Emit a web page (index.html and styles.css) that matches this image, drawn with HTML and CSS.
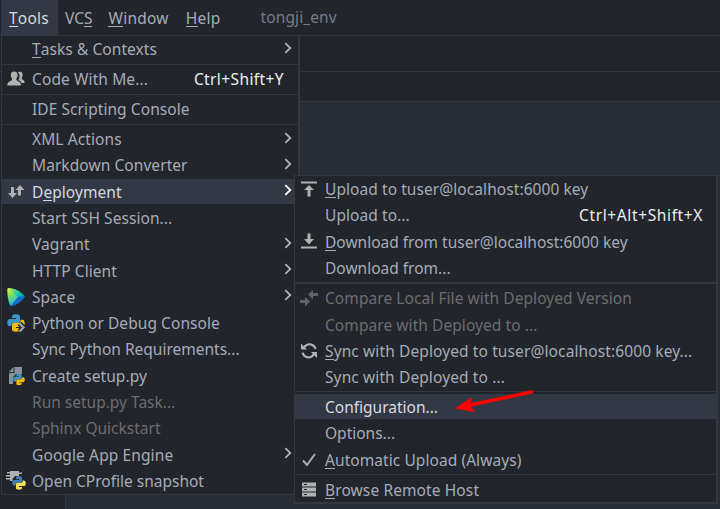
FILE: index.html
```html
<!DOCTYPE html>
<html lang="en">
<head>
<meta charset="utf-8">
<title>Tools menu</title>
<link rel="stylesheet" href="styles.css">
</head>
<body>
<div class="window">
  <header class="menubar">
    <span class="tab active"><u>T</u>ools</span>
    <span class="tab vcs">VC<u>S</u></span>
    <span class="tab win"><u>W</u>indow</span>
    <span class="tab help"><u>H</u>elp</span>
    <span class="project">tongji_env</span>
  </header>
  <div class="toolbar"></div>
  <div class="crumbs"></div>
  <main class="workspace"><div class="side"></div></main>

  <nav class="menu tools">
    <div class="item"><i></i><span><u>T</u>asks &amp; Contexts</span><svg class="chev" viewBox="0 0 8 12"><path d="M1.3 1.2 6.3 6l-5 4.8"/></svg></div>
    <hr>
    <div class="item"><i><svg viewBox="0 0 18 18"><path class="g" d="M11 2.2c3-1.4 5 .4 4.6 3.100-.1 1.500-.7 2.100-.9 3 .2 1.600 3 1.700 3 4.700h-3.200c-.6-1.800-2.200-2.200-3-2.900 1.300-1.900 1.800-5.700-.5-7.900z"/><path class="g" d="M3.800 5.500C3.600 2.700 5.200 1.500 7.200 1.500s3.700 1.200 3.400 4c-.1 1.700-.9 2.700-1.400 3.500.2 2.500 4.800 1.700 4.800 6.500H.3c0-4.800 4.700-4 4.900-6.500-.5-.8-1.300-1.800-1.400-3.500z"/></svg></i><span class="wide">Code With Me...</span><kbd>Ctrl+Shift+Y</kbd></div>
    <hr>
    <div class="item"><i></i><span>IDE Scripting Console</span></div>
    <hr>
    <div class="item"><i></i><span class="wide">XML Actions</span><svg class="chev" viewBox="0 0 8 12"><path d="M1.300 1.200 6.300 6l-5 4.800"/></svg></div>
    <div class="item"><i></i><span>Markdown Converter</span><svg class="chev" viewBox="0 0 8 12"><path d="M1.300 1.200 6.300 6l-5 4.800"/></svg></div>
    <div class="item on"><i><svg viewBox="0 0 18 18"><path class="g" d="M4 4h3v6h3l-4.500 5L1 10h3zM11 12.500V7H8.500l4.500-5 4.500 5H14v5.500z"/></svg></i><span>D<u>e</u>ployment</span><svg class="chev" viewBox="0 0 8 12"><path d="M1.300 1.200 6.300 6l-5 4.800"/></svg></div>
    <div class="item"><i></i><span>Start SSH Session...</span></div>
    <div class="item"><i></i><span>Vagrant</span><svg class="chev" viewBox="0 0 8 12"><path d="M1.300 1.200 6.300 6l-5 4.800"/></svg></div>
    <div class="item"><i></i><span>HTTP Client</span><svg class="chev" viewBox="0 0 8 12"><path d="M1.300 1.200 6.300 6l-5 4.800"/></svg></div>
    <div class="item"><i><svg viewBox="0 0 18 18"><defs><linearGradient id="sp" x1="0" y1="0" x2=".3" y2="1"><stop offset="0" stop-color="#f4f33c"/><stop offset=".45" stop-color="#7de05c"/><stop offset="1" stop-color="#08b8f0"/></linearGradient><linearGradient id="sq" x1="0" y1="0" x2="1" y2="1"><stop offset="0" stop-color="#b8f25c"/><stop offset=".6" stop-color="#10c8a8"/><stop offset="1" stop-color="#0a9ad0"/></linearGradient></defs><path fill="url(#sp)" d="M.3 1.500C.3.500 1 0 2 0l10 8.700L4.500 18C1.500 18 .3 7 .3 1.500z"/><path fill="url(#sq)" d="M1.500 0C8 0 14 3.500 18 8.700l-7 .3z"/><path fill="#1769c8" d="M11 8.700h7C14.500 13.500 9.500 17.500 4 18z"/></svg></i><span>Space</span><svg class="chev" viewBox="0 0 8 12"><path d="M1.300 1.200 6.300 6l-5 4.800"/></svg></div>
    <div class="item"><i><svg viewBox="0 0 18 18"><use href="#py"/><path fill="none" stroke="#22252b" stroke-width="5" d="m12.500 9.500 4 4-4 4"/><path fill="none" stroke="#9da6ae" stroke-width="2.300" d="m12.500 9.500 4 4-4 4"/></svg></i><span>Python or Debug Console</span></div>
    <div class="item"><i></i><span class="tight">Sync Python Requirements...</span></div>
    <div class="item"><i><svg viewBox="0 0 18 18"><path fill="#87939a" d="M7.500 0H15v7H9L6 10v7H2V6h5.500z"/><path fill="#87939a" d="M6.500 0v5H2z"/><svg x="6" y="6.500" width="12" height="12" viewBox="0 0 18 18"><use href="#py"/></svg></svg></i><span>Create setup.py</span></div>
    <div class="item off"><i></i><span class="tight">Run setup.py Task...</span></div>
    <div class="item off"><i></i><span class="tight">Sphinx Quickstart</span></div>
    <div class="item"><i></i><span class="wide">Google App Engine</span><svg class="chev" viewBox="0 0 8 12"><path d="M1.300 1.200 6.300 6l-5 4.800"/></svg></div>
    <div class="item"><i><svg viewBox="0 0 18 18"><path class="g" d="M3-1h9v1.500h3V2h-3v2H8L5.500 7v2H3V7.500h-4V6H3V4.500h-4V3H3V1.500h-3V0h3z"/><svg x="5" y="4" width="14" height="14" viewBox="0 0 18 18"><path fill="#3f7fb5" d="M5 4V2.500C5 .8 6.500.3 9 .3s4 .7 4 2.200V7c0 1.500-.8 2-2 2H7c-2 0-2.600 1-2.600 3.300H2.800C1 12.300.3 11 .3 8.500S1.200 5 3 5h6V4z"/><path fill="#ffdc50" d="M13 14v1.500c0 1.500-1.500 2.200-4 2.200s-4-.7-4-2.200V11c0-1.500.8-2 2-2h4c2 0 2.600-1 2.600-3.300h1.600c1.800 0 2.500 1.300 2.500 3.800S16.800 13 15 13H9v1z"/></svg></svg></i><span class="tight">Open CProfile snapshot</span></div>
  </nav>

  <nav class="menu deploy">
    <div class="item"><i><svg viewBox="0 0 18 18"><path class="g" d="M1 1.500h16v2H1zM9 5l5 5h-3.500v6.500h-3V10H4z"/></svg></i><span><u>U</u>pload to tuser@localhost:6000 key</span></div>
    <div class="item"><i></i><span>Upload to...</span><kbd class="long">Ctrl+Alt+Shift+X</kbd></div>
    <div class="item"><i><svg viewBox="0 0 18 18"><path class="g" d="M1 13.500h16v2H1zM7.500.500h3V6H14l-5 5.500L4 6h3.500z"/></svg></i><span class="tight"><u>D</u>ownload from tuser@localhost:6000 key</span></div>
    <div class="item"><i></i><span class="tight">Download from...</span></div>
    <hr class="thick">
    <div class="item off"><i><svg viewBox="0 0 18 18"><path fill="#616367" d="M8 5.500 13 1v3h5v3h-5v3.500zM0 11h5V8l5 4.500L5 17.500V14H0z"/></svg></i><span>Compare Local File with Deployed Version</span></div>
    <div class="item off"><i></i><span>Compare with Deployed to ...</span></div>
    <div class="item"><i><svg viewBox="0 0 18 18"><path fill="none" stroke="#afb1b3" stroke-width="2.200" d="M4 5.500C7 .8 13.500 1.200 15.600 7M14 12C11 17 4.500 16.500 2.400 10.700"/><path class="g" d="M1 1.500v6h6zM17 16v-6h-6z"/></svg></i><span class="wide"><u>S</u>ync with Deployed to tuser@localhost:6000 key...</span></div>
    <div class="item"><i></i><span class="wide">Sync with Deployed to ...</span></div>
    <hr>
    <div class="item on"><i></i><span class="tight">Configuration...</span></div>
    <div class="item"><i></i><span class="tight">Options...</span></div>
    <div class="item"><i><svg viewBox="0 0 18 18"><path fill="none" stroke="#afb1b3" stroke-width="2" d="m3 9.500 4 4.500 8-11"/></svg></i><span><u>A</u>utomatic Upload (Always)</span></div>
    <hr>
    <div class="item"><i><svg viewBox="0 0 18 18"><path class="g" fill-rule="evenodd" d="M2 1.500h14v4H2zM4 3v1h3V3zM2 6.500h14v4H2zM4 8v1h3V8zM2 11.500h14v4H2zM4 13v1h3v-1z"/></svg></i><span class="wide"><u>B</u>rowse Remote Host</span></div>
  </nav>

  <svg class="arrow" viewBox="0 0 80 24"><path d="M76.500 4 15 17" fill="none" stroke="#f00" stroke-width="3.600" stroke-linecap="round"/><path fill="#f00" d="m0 20.500 17-11.500-2 8 5 7z"/></svg>
  <svg class="defs"><defs><g id="py"><path fill="#3e94c2" d="M5 4V2.500C5 .8 6.500.3 9 .3s4 .7 4 2.200V7c0 1.500-.8 2-2 2H7c-2 0-2.600 1-2.600 3.300H2.800C1 12.300.3 11 .3 8.500S1.200 5 3 5h6V4z"/><path fill="#f4bd0c" d="M13 14v1.500c0 1.500-1.500 2.200-4 2.200s-4-.7-4-2.200V11c0-1.500.8-2 2-2h4c2 0 2.600-1 2.600-3.300h1.600c1.800 0 2.500 1.300 2.500 3.800S16.800 13 15 13H9v1z"/></g></defs></svg>
</div>
</body>
</html>
```
FILE: styles.css
```css
* { box-sizing: border-box; }
body { margin: 0; }
.window {
  position: relative;
  display: flex;
  flex-direction: column;
  width: 720px;
  height: 509px;
  overflow: hidden;
  background: #22252b;
  color: #a5acb8;
  font: 15.5px/26px "Noto Sans", "Open Sans", sans-serif;
  white-space: nowrap;
}
u {
  text-decoration: none;
  box-shadow: inset 0 -1px currentColor;
  display: inline-block;
  line-height: 18px;
}
.menubar { display: flex; height: 36px; border-bottom: 1px solid #333740; }
.tab { padding-top: 5px; margin-right: 16px; }
.tab.active { width: 57px; margin: 0 7px 0 1px; padding-left: 8px; background: #323844; color: #d7dae0; height: 35px; letter-spacing: .2px; }
.tab.win, .tab.help { letter-spacing: .25px; }
.tab.help { margin-left: 1px; }
.project { padding: 4px 0 0 24px; color: #747b8a; letter-spacing: .1px; }
.toolbar { height: 36px; border-bottom: 1px solid #333740; }
.crumbs { height: 30px; border-bottom: 1px solid #333740; }
.workspace { flex: 1; background: #282c34; }
.side { width: 66px; height: 100%; background: #22252b; border-right: 1px solid #333740; }

.menu { position: absolute; background: #22252b; border: 1px solid #333740; }
.tools { left: 1px; top: 35px; width: 299px; height: 460px; border-right-width: 2px; }
.deploy { left: 294px; top: 175px; width: 424px; height: 329px; border-right-width: 2px; border-bottom-width: 2px; }
.item { display: flex; align-items: center; height: 26.3px; padding-right: 14px; letter-spacing: .07px; }
.item i { width: 30px; padding-left: 5px; display: flex; flex: none; }
.item i > svg { width: 18px; height: 18px; overflow: visible; }
.deploy .item { padding-right: 13px; }
.item.on { background: linear-gradient(#323844, #323844) 0 0 / 100% 25px no-repeat; color: #d7dae0; }
.item.off { color: #6b6d70; }
.tight { letter-spacing: 0; }
.wide { letter-spacing: .11px; }
.g { fill: #afb1b3; }
kbd, .chev { margin-left: auto; }
kbd { font: inherit; color: #eceef0; letter-spacing: .4px; }
.long { letter-spacing: .62px; }
.chev { width: 8px; height: 12px; fill: none; stroke: #afb1b3; stroke-width: 1.8; margin: -3px -8px 0 auto; }
.on .chev { stroke: #fff; }
hr { margin: 1.7px 0 1px; height: 1px; border: 0; background: #333740; }
.deploy hr { margin: .8px 0 1.8px; }
.deploy hr.thick { height: 2px; margin: .8px 0 1.2px; }

.arrow { position: absolute; left: 455px; top: 388px; width: 80px; height: 24px; }
.defs { position: absolute; width: 0; height: 0; }
```
